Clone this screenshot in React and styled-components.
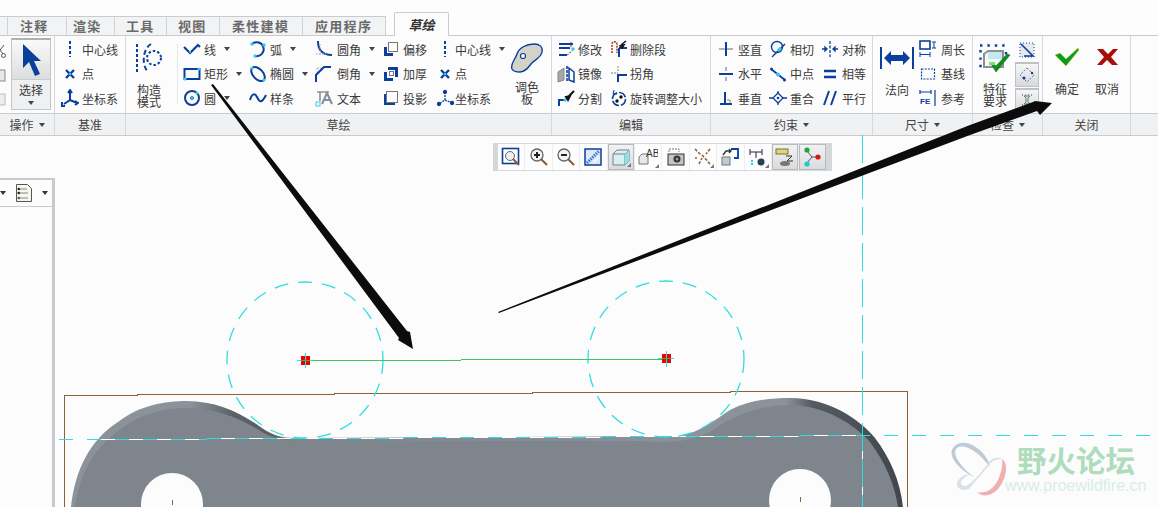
import React from 'react';
import styled, { createGlobalStyle } from 'styled-components';

const BLUE = '#0a3f9c';
const CY = '#38c8f0';
const SK = '#2fdde0';
const BROWN = '#8f6236';

const GlobalStyle = createGlobalStyle`
  html, body { margin: 0; padding: 0; background: #fcfcfc; }
  body { font-family: "Noto Sans CJK SC", "Liberation Sans", sans-serif; font-size: 12px; color: #3a3a3a; }
`;

const Page = styled.div`
  position: relative;
  width: 1158px;
  height: 507px;
  overflow: hidden;
  display: flex;
  flex-direction: column;
`;

const TabBar = styled.div`
  height: 35px;
  flex: none;
  display: flex;
  align-items: flex-end;
  background: #fdfdfd;
`;

const Tab = styled.div`
  width: ${(p) => p.$w}px;
  height: 19px;
  box-sizing: border-box;
  background: #f2f3f4;
  border-top: 1px solid #c9cccf;
  border-right: 1px solid #d0d3d6;
  color: #6a6a6a;
  font-weight: 700;
  font-size: 13px;
  line-height: 18px;
  padding-left: ${(p) => p.$pad || 0}px;
  letter-spacing: 1.3px;
  white-space: nowrap;
`;

const ActiveTab = styled.div`
  width: 55px;
  height: 24px;
  margin-left: 8px;
  box-sizing: border-box;
  background: #fcfcfc;
  border: 1px solid #c9cccf;
  border-bottom: none;
  border-radius: 2px 2px 0 0;
  color: #333;
  font-style: italic;
  font-weight: 700;
  font-size: 13px;
  line-height: 24px;
  text-align: center;
  margin-bottom: -1px;
  z-index: 1;
`;

const Ribbon = styled.div`
  height: 101px;
  flex: none;
  display: flex;
  border-top: 1px solid #c9cccf;
  border-bottom: 1px solid #c9cccf;
  box-sizing: border-box;
  background: #fcfcfc;
`;

const Group = styled.div`
  width: ${(p) => p.$w}px;
  flex: none;
  display: flex;
  flex-direction: column;
  border-right: ${(p) => (p.$last ? 'none' : '1px solid #d6d9dc')};
  box-sizing: border-box;
`;

const GroupBody = styled.div`
  height: 77px;
  flex: none;
  display: flex;
  padding-left: ${(p) => p.$pad || 0}px;
  box-sizing: border-box;
`;

const GroupLabel = styled.div`
  flex: 1;
  background: #f0f1f2;
  border-top: 1px solid #c9cccf;
  display: flex;
  align-items: center;
  justify-content: center;
  gap: 5px;
  color: #444;
  font-size: 12px;
`;

const Caret = styled.span`
  width: 0;
  height: 0;
  border-left: 3px solid transparent;
  border-right: 3px solid transparent;
  border-top: 4px solid #444;
  flex: none;
`;

const Column = styled.div`
  width: ${(p) => p.$w}px;
  margin-left: ${(p) => p.$ml || 0}px;
  flex: none;
  display: flex;
  flex-direction: column;
  padding-top: 1px;
`;

const Row = styled.div`
  height: 24.5px;
  display: flex;
  align-items: center;
  white-space: nowrap;
  svg { flex: none; width: 18px; height: 18px; margin-right: ${(p) => p.$gap ?? 3}px; }
  ${Caret} { margin-left: 8px; }
`;

const Big = styled.div`
  width: ${(p) => p.$w}px;
  margin-left: ${(p) => p.$ml || 0}px;
  flex: none;
  display: flex;
  flex-direction: column;
  align-items: center;
  text-align: center;
  line-height: 12px;
  padding-top: ${(p) => p.$top || 7}px;
  box-sizing: border-box;
  svg { flex: none; }
`;

const BigText = styled.div`
  margin-top: ${(p) => p.$gap}px;
`;

const Divider = styled.div`
  width: 1px;
  height: 60px;
  margin: 8px 0 0 9px;
  flex: none;
  background: #e6e8ea;
`;

const ClippedTools = styled.div`
  width: 6px;
  flex: none;
  overflow: hidden;
  display: flex;
  flex-direction: column;
  align-items: flex-end;
  gap: 10px;
  padding-top: 8px;
  svg { flex: none; }
`;

const SelectButton = styled.div`
  width: 40px;
  height: 72px;
  margin: 2px 0 0 5px;
  box-sizing: border-box;
  border: 1px solid #c4c7ca;
  border-top: 2px solid #aeb1b4;
  background: #eff0f1;
  display: flex;
  flex-direction: column;
`;

const SelectIcon = styled.div`
  height: 40px;
  border-bottom: 1px solid #c9cbce;
  background: linear-gradient(#fafafa, #dcdddf);
  display: flex;
  justify-content: center;
  padding-top: 3px;
  box-sizing: border-box;
`;

const SelectText = styled.div`
  display: flex;
  flex-direction: column;
  align-items: center;
  gap: 3px;
  padding-top: 2px;
  line-height: 16px;
`;

const MiniStack = styled.div`
  width: 24px;
  margin-left: 3px;
  flex: none;
  display: flex;
  flex-direction: column;
  gap: 1px;
  padding-top: 3px;
`;

const MiniButton = styled.div`
  height: ${(p) => p.$h}px;
  display: flex;
  align-items: center;
  justify-content: center;
  box-sizing: border-box;
  ${(p) => p.$on && 'background: linear-gradient(#f6f6f7, #d6d8da); border: 1px solid #bfc2c5; border-top-width: 2px;'}
`;

const Workspace = styled.div`
  position: relative;
  flex: 1;
  display: flex;
`;

const SidePanel = styled.div`
  width: 55px;
  flex: none;
  margin-top: 42px;
  border-top: 2px solid #c6cacd;
  border-right: 3px solid #c6cacd;
  box-sizing: border-box;
  z-index: 1;
`;

const SideHeader = styled.div`
  height: 27px;
  border-bottom: 1px solid #c6cacd;
  display: flex;
  align-items: center;
  justify-content: space-between;
  padding-right: 4px;
  box-sizing: border-box;
  ${Caret} { border-top-color: #333; }
`;

const ViewToolbar = styled.div`
  position: absolute;
  z-index: 1;
  left: 493px;
  top: 7px;
  height: 28px;
  display: flex;
  align-items: center;
  box-sizing: border-box;
  background: #eceeef;
  border: solid #d5d8da;
  border-width: 1px 6px 1px 5px;
  gap: 1px;
`;

const ViewButton = styled.div`
  position: relative;
  width: 26.4px;
  height: 26px;
  display: flex;
  align-items: center;
  justify-content: center;
  box-sizing: border-box;
  background: ${(p) => (p.$on ? 'linear-gradient(#f2f2f3, #d9dbdd)' : '#fdfdfd')};
  border: ${(p) => (p.$on ? '1px solid #b8bbbe' : 'none')};
  ${(p) => p.$corner && `
    &::after {
      content: '';
      position: absolute;
      right: 2px;
      bottom: 2px;
      border-left: 4px solid transparent;
      border-bottom: 4px solid #777;
    }
  `}
`;

const Sketch = styled.svg`
  position: absolute;
  left: 0;
  top: -136px;
  width: 1158px;
  height: 507px;
`;

const Overlay = styled.svg`
  position: absolute;
  left: 0;
  top: 0;
  width: 1158px;
  height: 507px;
  z-index: 3;
  pointer-events: none;
`;

const Watermark = styled.div`
  position: absolute;
  z-index: 2;
  left: 948px;
  top: 303px;
  width: 205px;
  height: 64px;
  display: flex;
`;

const WatermarkText = styled.div`
  padding-top: 3px;
  margin-left: -5px;
`;

const WatermarkTitle = styled.div`
  color: #aedcbc;
  font-size: 29.5px;
  font-weight: 700;
  line-height: 34px;
  padding-left: 12px;
  white-space: nowrap;
`;

const WatermarkUrl = styled.div`
  color: #d9ecea;
  font-family: "Liberation Sans", sans-serif;
  font-size: 16px;
  line-height: 16px;
  margin-top: 2px;
  white-space: nowrap;
`;

const S = ({ children, w = 18, h = 18, box = '0 0 18 18' }) => (
  <svg width={w} height={h} viewBox={box} fill="none">{children}</svg>
);

const icons = {
  centerline: <path d="M9 1v16" stroke={BLUE} strokeWidth="2" strokeDasharray="3 2" />,
  point: <g stroke={BLUE} strokeWidth="2.4"><path d="M5 5l8 8M13 5l-8 8" /><circle cx="9" cy="9" r="1.2" fill={CY} stroke="none" /></g>,
  coord: <g stroke={BLUE} strokeWidth="2"><path d="M9 2v9l-6 4M9 11l7 3" /><path d="M7 4l2-3 2 3M1 13v4h3M14 12l3 2-3 2" /></g>,
  line: <g><path d="M1 7l6 6 8-8 2 2" stroke={BLUE} strokeWidth="2.2" /><circle cx="7" cy="12" r="1" fill={CY} /></g>,
  rect: <g><rect x="1.5" y="4" width="15" height="10" stroke={BLUE} strokeWidth="2" /><circle cx="2" cy="14" r="1.6" fill={CY} /><circle cx="16" cy="4" r="1.6" fill={CY} /></g>,
  circle: <g><circle cx="9" cy="9" r="7" stroke={BLUE} strokeWidth="2" /><circle cx="9" cy="9" r="1.6" fill={CY} stroke={BLUE} strokeWidth=".6" /><circle cx="14" cy="4" r="1.6" fill={CY} /></g>,
  arc: <g><path d="M3 4a7 7 0 1 1 3 12" stroke={BLUE} strokeWidth="2" /><circle cx="3" cy="4" r="1.7" fill={CY} /><circle cx="15" cy="5" r="1.7" fill={CY} /><circle cx="6" cy="16" r="1.7" fill={CY} /></g>,
  ellipse: <g><ellipse cx="9" cy="9" rx="5" ry="8.4" transform="rotate(-42 9 9)" stroke={BLUE} strokeWidth="2" /><circle cx="3" cy="3" r="1.6" fill={CY} /><circle cx="15" cy="15" r="1.6" fill={CY} /></g>,
  spline: <path d="M1 11c2-7 5-7 7-3s4 8 9-2" stroke={BLUE} strokeWidth="2" />,
  fillet: <g><path d="M3 1c0 9 5 14 14 14" stroke={BLUE} strokeWidth="2" /><path d="M5 4v12M1 14h10" stroke="#b5b8bb" strokeDasharray="2 1" /></g>,
  chamfer: <g><path d="M2 3h7M2 3v7" stroke="#b5b8bb" strokeDasharray="2 1" /><path d="M1 17v-7l8-8h7" stroke={BLUE} strokeWidth="2" /></g>,
  text: <g><path d="M2 3h12" stroke="#888" strokeWidth="1.4" /><path d="M5 3v9" stroke="#888" strokeWidth="1.5" /><path d="M7 15l5-11 5 11M9 11h6" stroke="#7f8d9f" strokeWidth="2" /><rect x="1" y="13" width="4" height="4" stroke={CY} /></g>,
  offset: <g><path d="M2 7v9h9v-3H5V7z" fill={BLUE} /><rect x="6.500" y="2.500" width="9" height="9" stroke="#777" /></g>,
  thicken: <g><path d="M2 7v9h9v-3H5V7z" fill={BLUE} /><path d="M6 2h10v10h-3V5H6z" fill={BLUE} /><rect x="7.500" y="6.500" width="4" height="4" stroke="#777" /></g>,
  project: <g><path d="M2 5v11h11v-2H4V5z" fill={BLUE} /><rect x="4.500" y="2.500" width="11" height="11" stroke="#777" /></g>,
  coordThin: <g stroke={BLUE} strokeWidth="1.3"><path d="M9 3v8l-6 4M9 11l7 3" strokeDasharray="2 1" /><circle cx="9" cy="3" r="1.5" fill={BLUE} /><circle cx="3" cy="15" r="1.5" fill={BLUE} /><circle cx="16" cy="14" r="1.5" fill={BLUE} /></g>,
  modify: <g><path d="M2 4h14M2 8h11M2 15h8" stroke={BLUE} strokeWidth="2" /><path d="M14 2v5" stroke="#444" /><path d="M10 15l6-5" stroke="#999" strokeWidth="1.5" strokeDasharray="2 1" /><circle cx="16" cy="9" r="2" fill={CY} stroke="#fff" strokeWidth=".5" /></g>,
  mirror: <g><path d="M1 7l6-4v12l-6 2z" fill="#a5a8ab" stroke="#888" /><path d="M10 1v16" stroke={BLUE} strokeWidth="1.6" strokeDasharray="3 1" /><path d="M12 3l5 4v10l-5-2z" stroke={BLUE} strokeWidth="1.5" /></g>,
  split: <g><path d="M2 17v-6h7" stroke={BLUE} strokeWidth="2" /><circle cx="8" cy="11" r="1.7" fill={CY} /><path d="M10 9l7-7M9 8l4-1-2 4z" stroke="#111" strokeWidth="2" /></g>,
  trim: <g><path d="M2 13V4c0-3 5-3 5 0v9" stroke="#9c1c12" strokeWidth="1.3" strokeDasharray="2 1" /><path d="M9 8h8M9 8v9" stroke={BLUE} strokeWidth="2" /><path d="M11 5l5-4M10 6l4-1-2 3z" stroke="#111" strokeWidth="1.5" /></g>,
  corner: <g><path d="M1 8h7M8 1v6" stroke="#aaa" strokeDasharray="2 1" strokeWidth="1.5" /><path d="M8 17v-7h9" stroke={BLUE} strokeWidth="2" /></g>,
  scale: <g><circle cx="9" cy="10" r="6.500" stroke={BLUE} strokeWidth="1.6" strokeDasharray="8 2" /><circle cx="7" cy="12" r="1.7" fill="#111" /><circle cx="11" cy="8" r="1.7" fill="#111" /><path d="M4 1l-1 4 4 0" stroke={BLUE} /></g>,
  vertical: <g><path d="M2 9h14" stroke="#b0b3b6" strokeWidth="2" /><path d="M9 2v14" stroke={BLUE} strokeWidth="2" /></g>,
  horizontal: <g><path d="M9 2v4M9 12v4" stroke="#b0b3b6" strokeWidth="2" /><path d="M2 9h14" stroke={BLUE} strokeWidth="2" /></g>,
  perp: <g><path d="M8 3v12M3 15h12" stroke={BLUE} strokeWidth="2" /><path d="M10 11h3v3" stroke="#888" /></g>,
  tangent: <g><circle cx="8" cy="7" r="5.500" stroke={BLUE} strokeWidth="1.4" /><path d="M3 17L16 4" stroke={BLUE} strokeWidth="1.4" /><rect x="8" y="8" width="4" height="3" fill={CY} transform="rotate(-45 10 9)" /></g>,
  middle: <g><path d="M2 4l14 11" stroke={BLUE} strokeWidth="1.8" /><circle cx="9" cy="9.500" r="2" fill={CY} /><circle cx="2.500" cy="4" r="1.500" fill={BLUE} /><circle cx="15.500" cy="15" r="1.500" fill={BLUE} /></g>,
  coincide: <g><path d="M0 9h4M14 9h4M9 2v3M9 13v3" stroke={BLUE} strokeWidth="1.3" /><path d="M9 4l5 5-5 5-5-5z" stroke={BLUE} strokeWidth="1.3" /><circle cx="9" cy="9" r="1.300" fill={BLUE} /></g>,
  symmetric: <g><path d="M9 1v16" stroke={BLUE} strokeWidth="1.3" strokeDasharray="3 1.5" /><path d="M1 9h5M12 9h5M6 9l-2-2v4zM12 9l2-2v4z" stroke={BLUE} strokeWidth="1.3" /></g>,
  equal: <path d="M3 6h12M3 12h12" stroke={BLUE} strokeWidth="2.6" />,
  parallel: <path d="M3 16L8 2M10 16l5-14" stroke={BLUE} strokeWidth="2" />,
  perimeter: <g><rect x="1" y="1" width="10" height="8" stroke={BLUE} strokeWidth="1.6" /><path d="M13 2h4M13 8h4M15 2v6" stroke={BLUE} /><path d="M1 12v5M11 12v5M1 14.500h10" stroke={BLUE} /></g>,
  baseline: <rect x="2.500" y="4" width="13" height="10" stroke={BLUE} strokeWidth="1.2" strokeDasharray="2 1.2" />,
  reference: <g><path d="M1 3h11M1 1v4M12 1v4M16 1v16" stroke={BLUE} strokeWidth="1.2" /><text x="1" y="15" fontSize="8" fontWeight="700" fontFamily="Liberation Sans" fill={BLUE}>FE</text></g>,
};

const Item = ({ icon, gap, caret, children }) => (
  <Row $gap={gap}>
    <S>{icons[icon]}</S>
    {children}
    {caret && <Caret />}
  </Row>
);

const PaletteIcon = () => (
  <S w={34} h={30} box="0 0 34 30">
    <path d="M2 26c-2-5 3-9 5-15 2-6 9-10 17-10 6 0 9 3 8 8-1 6-8 8-11 12-3 4-6 8-11 8-4 0-7-1-8-3z" fill="#d5d2c8" stroke={BLUE} strokeWidth="1.4" />
    <circle cx="13" cy="13" r="2.500" fill="#fff" stroke={BLUE} strokeWidth="1.2" />
  </S>
);

const ConstructIcon = () => (
  <S w={30} h={30} box="0 0 30 30">
    <path d="M3 1v29" stroke={BLUE} strokeWidth="2" strokeDasharray="3 2" />
    <path d="M17 1C9 6 7 21 14 29" stroke={BLUE} strokeWidth="2" strokeDasharray="5 3" />
    <circle cx="20" cy="15" r="7" stroke={BLUE} strokeWidth="2" strokeDasharray="2.5 2" />
  </S>
);

const NormalIcon = () => (
  <S w={34} h={22} box="0 0 34 22">
    <path d="M1 0v22M33 0v22" stroke={BLUE} strokeWidth="2" />
    <path d="M4 11l7-7v4h12V4l7 7-7 7v-4H11v4z" fill={BLUE} />
  </S>
);

const FeatureIcon = () => (
  <S w={32} h={30} box="0 0 32 30">
    <path d="M1 1.500h26" stroke={BLUE} strokeWidth="2.4" strokeDasharray="2.4 5" />
    <path d="M1.500 6v20" stroke={BLUE} strokeWidth="2.4" strokeDasharray="2.4 5" />
    <path d="M27 8v6" stroke={BLUE} strokeWidth="2.4" strokeDasharray="2.4 4" />
    <path d="M5 23V10l4-3h15v16z" fill="#f6f8f8" stroke="#8e9093" strokeWidth="2" />
    <path d="M9 8h14v7H9z" fill="#bfeaf0" />
    <path d="M12 20l5 8L31 11l-3-1-11 12-3-3z" fill="#0f8f1e" stroke="#0a5f12" strokeWidth=".5" />
    <path d="M10 18h6v3h-6z" fill="#7ce07c" />
  </S>
);

const CheckIcon = () => (
  <S w={26} h={20} box="0 0 26 20">
    <path d="M1 8l5-2 6 6L24 1l1 2-13 16z" fill="#0d9a20" stroke="#c5d638" strokeWidth=".6" />
  </S>
);

const CrossIcon = () => (
  <S w={23} h={18} box="0 0 23 18">
    <path d="M1 1h6l5 5 5-5h5l-7 8 7 8h-6l-5-5-5 5H1l7-8z" fill="#a80f08" />
  </S>
);

const Tool = ({ children }) => <S w={20} h={20} box="0 0 20 20">{children}</S>;

const Magnifier = ({ sign }) => (
  <Tool>
    <circle cx="8" cy="8" r="6" fill="#f4f4f4" stroke="#666" strokeWidth="1.3" />
    <path d="M12 12l6 6" stroke="#8a5a33" strokeWidth="2" />
    <path d="M5 8h6" stroke="#222" strokeWidth="2" />
    {sign === '+' && <path d="M8 5v6" stroke="#222" strokeWidth="2" />}
  </Tool>
);

const toolbarIcons = [
  <Tool key="0"><rect x="1.500" y="1.500" width="16" height="15" fill="#fff" stroke={BLUE} strokeWidth="1.6" /><circle cx="9" cy="9" r="4.500" fill="#eee" stroke="#666" /><path d="M12 12l6 6" stroke="#8a5a33" strokeWidth="2" /></Tool>,
  <Magnifier key="1" sign="+" />,
  <Magnifier key="2" sign="-" />,
  <Tool key="3"><rect x="2" y="2" width="16" height="16" fill="#dfe9f6" stroke={BLUE} strokeWidth="1.500" /><path d="M4 16L16 4" stroke="#3c78c8" strokeWidth="3" strokeDasharray="1.500 1" /><path d="M11 15l5-5" stroke="#fff" strokeWidth="2" strokeDasharray="1 1" /></Tool>,
  <Tool key="4"><path d="M2 7l4-4h12v11l-4 4H2z" fill="#d4f2f5" stroke="#7b7e81" /><path d="M14 7h-12M14 7v11M14 7l4-4" stroke="#7b7e81" /><path d="M14 7l4-4v11l-4 4z" fill="#8fe0e8" /></Tool>,
  <Tool key="5"><path d="M1 10l3-3h6v10H1z" stroke="#777" fill="#e4e8ea" /><text x="8" y="10" fontSize="10" fontFamily="Liberation Sans" fill="#333">AB</text></Tool>,
  <Tool key="6"><path d="M3 5V2h10v3" stroke="#777" strokeDasharray="2 1" /><rect x="2" y="7" width="16" height="11" fill="#c4c4c4" stroke="#333" /><circle cx="11" cy="12" r="3.500" fill="#333" /><circle cx="11" cy="12" r="1.500" fill="#999" /></Tool>,
  <Tool key="7"><path d="M2 2l6 6M17 2l-4 5M6 17l3-6M9 8l8 9M2 11h2" stroke="#8a5a33" strokeWidth="1.500" strokeDasharray="3 1.500" /></Tool>,
  <Tool key="8"><path d="M11 2h7v9h-4" stroke={BLUE} strokeWidth="1.800" /><path d="M3 8l3-4h5M9 2l2 2-2 2" stroke="#333" strokeWidth="1.400" /><rect x="2" y="10" width="8" height="8" fill="#bcd" stroke="#777" /></Tool>,
  <Tool key="9"><path d="M2 2v6M14 2v6M2 5h12M8 5v6" stroke="#224" /><circle cx="13" cy="15" r="3.500" fill="#245" /><path d="M3 14h2M3 17h2" stroke={CY} strokeWidth="2" /></Tool>,
  <Tool key="10"><rect x="1" y="2" width="12" height="5" fill="#dbd486" stroke="#7b7620" /><path d="M11 9h6l-5 5h6" stroke="#333" /><ellipse cx="10" cy="16.500" rx="5" ry="2.500" fill="#777" /></Tool>,
  <Tool key="11"><path d="M5 4l5 6-5 6M10 10h7" stroke="#555" /><circle cx="5" cy="3" r="2.600" fill="#1ca83a" /><circle cx="16" cy="10" r="2.600" fill="#d8141c" /><circle cx="5" cy="17" r="2.600" fill="#1cc8d8" /></Tool>,
];
const toolbarOn = [4, 10, 11];
const toolbarCorner = [4, 5, 7, 9];

const Butterfly = () => (
  <S w={62} h={62} box="0 0 62 62">
    <path d="M8 6C20 -2 40 14 42 28 30 12 16 4 9 9 3 14 12 28 26 38 10 30 -4 14 8 6z" fill="#bccbd6" />
    <path d="M54 20c6 4 6 18-4 30-8 8-16 8-21 3 8 2 15-2 20-10 4-8 6-16 5-23z" fill="#efb0b0" />
    <path d="M42 22c4-4 10-4 12-2-6 0-10 2-13 6-6 8-14 16-20 24-6 2-12 0-12-5 0-4 6-10 14-10-6 2-10 6-10 9 0 3 4 4 7 2 8-6 16-16 22-24z" fill="#d9e0e6" />
  </S>
);

export default function App() {
  return (
    <Page>
      <GlobalStyle />
      <TabBar>
        <Tab $w={8} />
        <Tab $w={59} $pad={12}>注释</Tab>
        <Tab $w={48} $pad={6}>渲染</Tab>
        <Tab $w={52} $pad={11}>工具</Tab>
        <Tab $w={53} $pad={11}>视图</Tab>
        <Tab $w={83} $pad={12}>柔性建模</Tab>
        <Tab $w={83} $pad={12}>应用程序</Tab>
        <ActiveTab>草绘</ActiveTab>
      </TabBar>
      <Ribbon>
        <Group $w={55}>
          <GroupBody>
            <ClippedTools>
              <S w={12} h={14} box="0 0 12 14"><path d="M2 1l7 9M10 1L3 10" stroke="#555" /><circle cx="2.500" cy="11.500" r="2" stroke="#555" /><circle cx="9.500" cy="11.500" r="2" stroke="#555" /></S>
              <S w={12} h={14} box="0 0 12 14"><rect x="1" y="2" width="10" height="11" fill="#e8e8e8" stroke="#888" /></S>
              <S w={12} h={14} box="0 0 12 14"><rect x="1" y="2" width="10" height="11" fill="#eee" stroke="#bbb" /></S>
            </ClippedTools>
            <SelectButton>
              <SelectIcon>
                <S w={22} h={34} box="0 0 22 34">
                  <path d="M3 1v24l6-6 6 14 5-2-6-13h7z" fill={BLUE} />
                </S>
              </SelectIcon>
              <SelectText>选择<Caret /></SelectText>
            </SelectButton>
          </GroupBody>
          <GroupLabel>操作<Caret /></GroupLabel>
        </Group>
        <Group $w={71}>
          <GroupBody $pad={6}>
            <Column $w={62}>
              <Item icon="centerline">中心线</Item>
              <Item icon="point">点</Item>
              <Item icon="coord">坐标系</Item>
            </Column>
          </GroupBody>
          <GroupLabel>基准</GroupLabel>
        </Group>
        <Group $w={426}>
          <GroupBody $pad={4}>
            <Big $w={38} $top={7}>
              <ConstructIcon />
              <BigText $gap={11}>构造<br />模式</BigText>
            </Big>
            <Divider />
            <Column $w={66} $ml={5}>
              <Item icon="line" caret>线</Item>
              <Item icon="rect" caret>矩形</Item>
              <Item icon="circle" caret>圆</Item>
            </Column>
            <Column $w={66}>
              <Item icon="arc" caret>弧</Item>
              <Item icon="ellipse" caret>椭圆</Item>
              <Item icon="spline">样条</Item>
            </Column>
            <Column $w={67}>
              <Item icon="fillet" gap={4} caret>圆角</Item>
              <Item icon="chamfer" gap={4} caret>倒角</Item>
              <Item icon="text" gap={4}>文本</Item>
            </Column>
            <Column $w={54}>
              <Item icon="offset">偏移</Item>
              <Item icon="thicken">加厚</Item>
              <Item icon="project">投影</Item>
            </Column>
            <Column $w={72}>
              <Item icon="centerline" gap={1} caret>中心线</Item>
              <Item icon="point" gap={1}>点</Item>
              <Item icon="coordThin" gap={1}>坐标系</Item>
            </Column>
            <Big $w={38} $top={7}>
              <PaletteIcon />
              <BigText $gap={8}>调色<br />板</BigText>
            </Big>
          </GroupBody>
          <GroupLabel>草绘</GroupLabel>
        </Group>
        <Group $w={159}>
          <GroupBody $pad={5}>
            <Column $w={53}>
              <Item icon="modify">修改</Item>
              <Item icon="mirror">镜像</Item>
              <Item icon="split">分割</Item>
            </Column>
            <Column $w={100}>
              <Item icon="trim" gap={2}>删除段</Item>
              <Item icon="corner" gap={2}>拐角</Item>
              <Item icon="scale" gap={2}>旋转调整大小</Item>
            </Column>
          </GroupBody>
          <GroupLabel>编辑</GroupLabel>
        </Group>
        <Group $w={162}>
          <GroupBody $pad={6}>
            <Column $w={52}>
              <Item icon="vertical">竖直</Item>
              <Item icon="horizontal">水平</Item>
              <Item icon="perp">垂直</Item>
            </Column>
            <Column $w={52}>
              <Item icon="tangent">相切</Item>
              <Item icon="middle">中点</Item>
              <Item icon="coincide">重合</Item>
            </Column>
            <Column $w={50}>
              <Item icon="symmetric">对称</Item>
              <Item icon="equal">相等</Item>
              <Item icon="parallel">平行</Item>
            </Column>
          </GroupBody>
          <GroupLabel>约束<Caret /></GroupLabel>
        </Group>
        <Group $w={100}>
          <GroupBody $pad={7}>
            <Big $w={34} $top={11}>
              <NormalIcon />
              <BigText $gap={15}>法向</BigText>
            </Big>
            <Column $w={56} $ml={5}>
              <Item icon="perimeter" gap={4}>周长</Item>
              <Item icon="baseline" gap={4}>基线</Item>
              <Item icon="reference" gap={4}>参考</Item>
            </Column>
          </GroupBody>
          <GroupLabel>尺寸<Caret /></GroupLabel>
        </Group>
        <Group $w={70}>
          <GroupBody $pad={5}>
            <Big $w={34} $top={8}>
              <FeatureIcon />
              <BigText $gap={9}>特征<br />要求</BigText>
            </Big>
            <MiniStack>
              <MiniButton $h={22}>
                <S w={16} h={16} box="0 0 16 16"><rect x="1" y="1" width="14" height="14" fill="#e6eaee" stroke={BLUE} strokeDasharray="1 2" /><path d="M2 2l12 12H5" stroke={BLUE} strokeWidth="1.600" /></S>
              </MiniButton>
              <MiniButton $h={25} $on>
                <S w={16} h={16} box="0 0 16 16"><path d="M8 1l7 7-7 7-7-7z" stroke="#777" strokeDasharray="2 1.500" /><circle cx="5" cy="11" r="1.500" fill={BLUE} /><circle cx="13" cy="6" r="1.200" fill={BLUE} /></S>
              </MiniButton>
              <MiniButton $h={23} $on>
                <S w={16} h={16} box="0 0 16 16"><path d="M3 3h10M3 13h10" stroke={BLUE} strokeDasharray="1 2" /><path d="M5 4h6L9 6v4l2 2H5l2-2V6z" fill="#bfeaf0" stroke="#777" /></S>
              </MiniButton>
            </MiniStack>
          </GroupBody>
          <GroupLabel>检查<Caret /></GroupLabel>
        </Group>
        <Group $w={88}>
          <GroupBody $pad={11}>
            <Big $w={26} $top={11}>
              <CheckIcon />
              <BigText $gap={16}>确定</BigText>
            </Big>
            <Big $w={26} $top={12} $ml={14}>
              <CrossIcon />
              <BigText $gap={17}>取消</BigText>
            </Big>
          </GroupBody>
          <GroupLabel>关闭</GroupLabel>
        </Group>
        <Group $w={27} $last>
          <GroupBody />
          <GroupLabel />
        </Group>
      </Ribbon>
      <Workspace>
        <Sketch viewBox="0 0 1158 507">
          <defs>
            <linearGradient id="rim" gradientUnits="userSpaceOnUse" x1="70" y1="0" x2="903" y2="0">
              <stop offset="0" stopColor="#8b9299" />
              <stop offset=".144" stopColor="#8b9299" />
              <stop offset=".198" stopColor="#5a6066" />
              <stop offset=".24" stopColor="#5a6066" />
              <stop offset=".27" stopColor="#7e858c" />
              <stop offset=".74" stopColor="#8b9299" />
              <stop offset=".86" stopColor="#8b9299" />
              <stop offset=".89" stopColor="#555b62" />
              <stop offset="1" stopColor="#40464c" />
            </linearGradient>
          </defs>
          <path d="M71 507C75 470 90 440 118 422C140 405 165 401 187 401C215 401 240 412 262 428C272 435 282 438 295 438L680 436C700 432 715 420 730 410C750 400 770 398 790 398C830 398 860 420 875 438C890 458 900 480 903 507Z" fill="url(#rim)" />
          <path d="M75 507C80 472 95 447 122 428C143 413 165 408 187 408C215 408 240 418 262 432C272 438 285 441 300 441L640 441C680 444 700 440 722 424C745 410 770 405 790 405C825 405 855 425 870 442C885 462 895 485 898 507Z" fill="#7e858c" />
          <circle cx="172" cy="504" r="31" fill="#fcfcfc" />
          <circle cx="800" cy="500" r="31" fill="#fcfcfc" />
          <g shapeRendering="crispEdges">
            <path d="M172 500v5M800 497v5" stroke={BROWN} />
            <path d="M64.500 507V395.500H137.500V394.500H334.500V393.500H532.500V392.500H730.500V391.500H907.500V507" fill="none" stroke={BROWN} />
            <path d="M100 439.500H207M207 438.500H404M404 437.500H602M602 436.500H800M800 435.500H862" stroke="#fdfdfd" fill="none" />
            <path d="M862.500 396V507" stroke="#fdfdfd" />
            <path d="M59 439.500H207M207 438.500H404M404 437.500H602M602 436.500H800M800 435.500H1158" stroke={SK} strokeDasharray="14 14" fill="none" />
            <path d="M862.500 135V507" stroke={SK} strokeDasharray="28 8" />
          </g>
          <circle cx="305" cy="360" r="78" fill="none" stroke={SK} strokeWidth="1.3" strokeDasharray="14 10" />
          <circle cx="666" cy="359" r="78" fill="none" stroke={SK} strokeWidth="1.3" strokeDasharray="14 10" />
          <g shapeRendering="crispEdges">
            <path d="M305 360.500H461M461 359.500H666" stroke="#3cc858" fill="none" />
            <g fill="#f00000">
              <rect x="301" y="356" width="9" height="9" />
              <rect x="662" y="354" width="9" height="9" />
            </g>
            <path d="M297 360.500H313M305.500 353V368M658 358.500H674M666.500 351V367" stroke={SK} />
            <path d="M301 360.500H310M662 358.500H671" stroke="#35b04a" />
          </g>
        </Sketch>
        <SidePanel>
          <SideHeader>
            <Caret />
            <S w={18} h={20} box="0 0 18 20">
              <path d="M1.500 1.500h11l4 4v13h-15z" fill="#f8f7ee" stroke="#555" />
              <path d="M5 6h7M5 10h8M5 15h8" stroke="#888" />
              <circle cx="3.800" cy="6" r="1.300" fill="#222" />
              <circle cx="3.800" cy="10" r="1.300" fill="#222" />
              <circle cx="3.800" cy="15" r="1.300" fill="#555" />
            </S>
            <Caret />
          </SideHeader>
        </SidePanel>
        <ViewToolbar>
          {toolbarIcons.map((icon, i) => (
            <ViewButton key={i} $on={toolbarOn.includes(i)} $corner={toolbarCorner.includes(i)}>{icon}</ViewButton>
          ))}
        </ViewToolbar>
        <Watermark>
          <Butterfly />
          <WatermarkText>
            <WatermarkTitle>野火论坛</WatermarkTitle>
            <WatermarkUrl>www.proewildfire.cn</WatermarkUrl>
          </WatermarkText>
        </Watermark>
      </Workspace>
      <Overlay viewBox="0 0 1158 507">
        <path d="M211 85L213 84L407 331L410 332L413 349L398 340L399 338Z" fill="#0c0c0c" />
        <path d="M498 312L970 125L1033 102L1035 101L1052 103L1040 115L1037 111L970 135L499 313Z" fill="#0c0c0c" />
      </Overlay>
    </Page>
  );
}
